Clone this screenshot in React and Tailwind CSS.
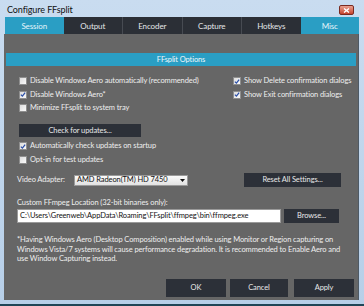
import React from 'react';

const font = { fontFamily: 'Lato, "Noto Sans", sans-serif' };

const Check = ({ checked, label }) => (
    <div className="flex items-center h-full">
        <div className="w-[8px] h-[8px] border border-[#8f8f8f] bg-gradient-to-br from-[#dcdcdc] to-[#fafafa] flex items-center justify-center">
            {checked && (
                <svg width="7" height="7" viewBox="0 0 7 7">
                    <path d="M1 3.6 L2.8 5.4 L6 1.2" stroke="#2b4fa8" strokeWidth="1.5" fill="none" />
                </svg>
            )}
        </div>
        <span className="ml-[3px] text-[7.5px] text-[#eeeeee] leading-none whitespace-nowrap">{label}</span>
    </div>
);

const DarkButton = ({ className, children }) => (
    <div className={`bg-[#2c3038] text-[#e8e8e8] text-[7.5px] flex items-center justify-center leading-none ${className}`}>
        {children}
    </div>
);

const tabs = ['Session', 'Output', 'Encoder', 'Capture', 'Hotkeys', 'Misc'];

export default function App() {
    return (
        <div className="w-[364px] h-[306px] bg-gradient-to-b from-[#c9dcf0] to-[#b7cfe8] flex flex-col overflow-hidden tracking-[-0.1px]" style={font}>
            {/* title bar */}
            <div className="h-[17px] flex items-start justify-between">
                <span className="text-[9px] text-[#111] ml-[7px] mt-[5px] leading-none">Configure FFsplit</span>
                <div className="w-[15px] h-[10px] mt-[5px] mr-[10px] rounded-[2px] border border-[#7a2a20] bg-gradient-to-b from-[#e8a090] to-[#c4412c] flex items-center justify-center">
                    <svg width="7" height="5" viewBox="0 0 7 5">
                        <path d="M1 0.5 L6 4.5 M6 0.5 L1 4.5" stroke="#fff" strokeWidth="1.4" />
                    </svg>
                </div>
            </div>

            {/* tabs */}
            <div className="h-[17px] flex ml-[5px] mr-[5px]">
                {tabs.map((t, i) => (
                    <div
                        key={t}
                        className={`flex-1 flex items-center justify-center text-[8px] leading-none ${
                            i === 0 || i === 5 ? 'bg-[#2a9ec4] text-[#e6f4fa]' : 'bg-[#2b2f36] text-[#e4e6e9]'
                        } ${i > 1 && i < 5 ? 'border-l border-[#474b52]' : ''}`}
                    >
                        {t}
                    </div>
                ))}
            </div>

            {/* content */}
            <div className="ml-[4px] mr-[5px] h-[266px] bg-[#666666] flex flex-col border-r border-[#4e5a66]">
                <div className="mt-[19px] mx-[2px] h-[13px] bg-[#2a9ec4] flex items-center justify-center text-[7.5px] text-[#f0f8fc] leading-none">
                    FFsplit Options
                </div>

                <div className="flex mt-[8px]">
                    <div className="flex flex-col ml-[15px] w-[214px]">
                        <div className="h-[14px]"><Check label="Disable Windows Aero automatically (recommended)" /></div>
                        <div className="h-[13px]"><Check checked label="Disable Windows Aero*" /></div>
                        <div className="h-[14px]"><Check label="Minimize FFsplit to system tray" /></div>
                    </div>
                    <div className="flex flex-col">
                        <div className="h-[14px]"><Check checked label="Show Delete confirmation dialogs" /></div>
                        <div className="h-[13px]"><Check checked label="Show Exit confirmation dialogs" /></div>
                    </div>
                </div>

                <DarkButton className="mt-[9px] ml-[15px] w-[122px] h-[13px]">Check for updates...</DarkButton>

                <div className="h-[14px] mt-[2px] ml-[15px]"><Check checked label="Automatically check updates on startup" /></div>
                <div className="h-[14px] ml-[15px]"><Check label="Opt-in for test updates" /></div>

                <div className="h-[14px] mt-[6px] flex items-center">
                    <span className="ml-[13px] w-[57px] text-[7.5px] text-[#eeeeee] leading-none">Video Adapter:</span>
                    <div className="w-[114px] h-[11px] bg-gradient-to-b from-[#fafafa] to-[#e2e2e2] border border-[#9a9a9a] flex items-center justify-between px-[2px]">
                        <span className="text-[7.5px] text-[#111] leading-none">AMD Radeon(TM) HD 7450</span>
                        <svg width="5" height="3" viewBox="0 0 5 3"><path d="M0 0 H5 L2.5 3 Z" fill="#111" /></svg>
                    </div>
                    <DarkButton className="ml-[56px] w-[97px] h-[14px]">Reset All Settings...</DarkButton>
                </div>

                <div className="h-[10px] mt-[11px] ml-[13px] flex items-center text-[7.5px] text-[#eeeeee] leading-none">
                    Custom FFmpeg Location (32-bit binaries only):
                </div>
                <div className="h-[14px] mt-[1px] flex">
                    <div className="ml-[13px] w-[264px] h-full bg-white border border-[#9a9a9a] flex items-center px-[2px] text-[7.5px] text-[#111] leading-none">
                        C:\Users\Greenweb\AppData\Roaming\FFsplit\ffmpeg\bin\ffmpeg.exe
                    </div>
                    <DarkButton className="ml-[3px] w-[55px] h-full">Browse...</DarkButton>
                </div>

                <p className="mt-[12px] ml-[13px] mr-[8px] text-[7.5px] leading-[9.5px] text-[#eeeeee]">
                    *Having Windows Aero (Desktop Composition) enabled while using Monitor or Region capturing on Windows Vista/7 systems will cause performance degradation. It is recommended to Enable Aero and use Window Capturing instead.
                </p>

                <div className="mt-auto mb-[3px] flex justify-end pr-[4px]">
                    <DarkButton className="w-[60px] h-[18px]">OK</DarkButton>
                    <DarkButton className="ml-[4px] w-[58px] h-[18px]">Cancel</DarkButton>
                    <DarkButton className="ml-[6px] w-[60px] h-[18px]">Apply</DarkButton>
                </div>
            </div>
            <div className="flex-1" />
            <div className="h-[2px] bg-[#1f4657]" />
        </div>
    );
}
